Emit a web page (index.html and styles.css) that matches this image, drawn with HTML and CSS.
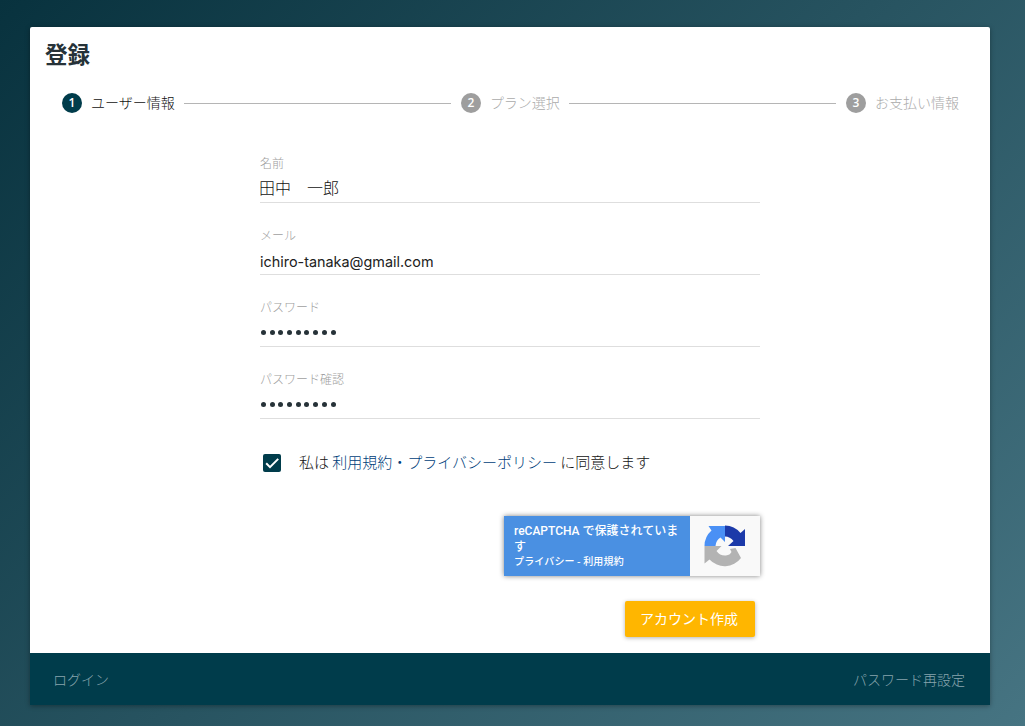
FILE: index.html
```html
<!DOCTYPE html>
<html lang="ja">
<head>
<meta charset="utf-8">
<title>登録</title>
<link rel="stylesheet" href="styles.css">
</head>
<body>
<main class="card">
  <h1 class="title">登録</h1>
  <div class="steps">
    <div class="step active"><span class="num">1</span><span class="step-label">ユーザー情報</span></div>
    <span class="line"></span>
    <div class="step"><span class="num">2</span><span class="step-label">プラン選択</span></div>
    <span class="line"></span>
    <div class="step"><span class="num">3</span><span class="step-label">お支払い情報</span></div>
  </div>
  <form class="form">
    <div class="field name"><span class="label">名前</span><span class="value">田中　一郎</span></div>
    <div class="field"><span class="label">メール</span><span class="value latin">ichiro-tanaka@gmail.com</span></div>
    <div class="field"><span class="label">パスワード</span><span class="value dots"><i></i><i></i><i></i><i></i><i></i><i></i><i></i><i></i><i></i></span></div>
    <div class="field"><span class="label">パスワード確認</span><span class="value dots"><i></i><i></i><i></i><i></i><i></i><i></i><i></i><i></i><i></i></span></div>
    <div class="agree">
      <svg class="check" viewBox="0 0 18 18"><rect width="18" height="18" rx="2" fill="#003c4b"/><path d="M3.2 9.3 7 13.1 15.2 4.9" fill="none" stroke="#fff" stroke-width="2"/></svg>
      <span class="agree-text">私は <a>利用規約・プライバシーポリシー</a> に同意します</span>
    </div>
    <div class="captcha">
      <div class="captcha-text">
        <div class="captcha-main">reCAPTCHA で保護されています</div>
        <div class="captcha-links">プライバシー - 利用規約</div>
      </div>
      <div class="captcha-logo">
        <svg viewBox="0 0 42 42">
          <path d="M.5 21A20.500 20.500 0 0 1 7.500 5.500L4.500 1H21V17L16.500 12.500Q12 15 11.500 21Z" fill="#4a90f5"/>
          <path d="M21 .5A20.500 20.500 0 0 1 36.500 8L41 4V21H24L29.500 16Q26 11.500 21 11.500Z" fill="#1c3aa9"/>
          <path d="M.5 21H17.500L12.500 26Q16 31 22 30.500Q26 30 27.500 27L26 24L31.500 23L37 33A20.500 20.500 0 0 1 5.500 34.500L.5 38.500Z" fill="#b3b3b3"/>
        </svg>
      </div>
    </div>
    <button class="submit" type="button">アカウント作成</button>
  </form>
  <footer class="footer"><a>ログイン</a><a>パスワード再設定</a></footer>
</main>
</body>
</html>
```
FILE: styles.css
```css
* { box-sizing: border-box; }
body {
  margin: 0;
  height: 726px;
  overflow: hidden;
  padding: 27px 35px 21px 30px;
  background: linear-gradient(135deg, #08323e, #467482);
  font-family: "Noto Sans CJK JP", sans-serif;
  font-weight: 300;
  color: #111;
}
.card {
  height: 678px;
  display: flex;
  flex-direction: column;
  background: #fff;
  border-radius: 2px 2px 0 0;
  box-shadow: 0 1px 5px rgba(0, 0, 0, .35);
}
.title { margin: 9px 0 0 15px; font-size: 22.5px; line-height: 34px; font-weight: 700; color: #263238; }
.steps { display: flex; align-items: center; height: 20px; margin: 23px 30px 0 32px; font-size: 14px; color: #aaa; white-space: nowrap; }
.step { display: flex; align-items: center; gap: 9px; height: 20px; }
.step-label { line-height: 20px; padding: 0 1px 2px 0; }
.active { color: #111; }
.num { width: 20px; height: 20px; border-radius: 50%; background: #9e9e9e; color: #fff; font: 600 12px/20px "Open Sans", sans-serif; text-align: center; }
.active .num { background: #003c4b; }
.line { flex: 1; height: 1px; background: #b5b5b5; margin: 0 10px 0 8px; }
.form { width: 500px; margin: 41px 0 0 230px; display: flex; flex-direction: column; }
.field { height: 72px; padding-top: 23px; border-bottom: 1px solid #dedede; display: flex; flex-direction: column; }
.field.name { height: 49px; padding-top: 0; }
.label { font-size: 12px; line-height: 18px; color: #a0a0a0; }
.value { font-size: 16px; line-height: 30px; }
.name .value { margin-left: -1px; }
.latin { font: 400 14.4px/30px Inter, sans-serif; margin-top: 3px; color: #212121; }
.dots { display: flex; gap: 3.7px; padding: 14px 0 0 1px; }
.dots i { width: 5px; height: 5px; border-radius: 50%; background: #263238; }
.agree { display: flex; align-items: center; gap: 18px; height: 24px; margin: 32px 0 0 3px; font-size: 15px; white-space: nowrap; }
.agree-text { padding-bottom: 3px; }
.check { width: 18px; height: 18px; }
.agree a { color: #00407a; }
.captcha { display: flex; align-self: flex-end; width: 256px; height: 60px; margin-top: 41px; box-shadow: 0 0 5px gray; }
.captcha-text { width: 186px; padding: 7px 0 0 10px; background: #4a90e2; color: #fff; white-space: nowrap; }
.captcha-main { width: 170px; font: 500 12px/16px Roboto, "Noto Sans CJK JP", sans-serif; white-space: normal; word-break: break-all; }
.captcha-links { font-size: 10px; line-height: 11px; font-weight: 500; letter-spacing: .15px; }
.captcha-logo { flex: 1; background: #f9f9f9; padding: 9px 0 0 14px; }
.captcha-logo svg { display: block; width: 42px; height: 42px; }
.submit { align-self: flex-end; width: 130px; height: 36px; margin: 25px 5px 0 0; padding: 0 2px 2px 0; border: 0; border-radius: 2px; background: #ffb600; color: #fff; font: 400 14px/34px "Noto Sans CJK JP", sans-serif; box-shadow: 0 1px 4px rgba(0, 0, 0, .3); }
.footer { display: flex; justify-content: space-between; align-items: center; height: 52px; margin-top: auto; padding: 0 25px 0 23px; background: #003c4b; color: #88a5ae; font-size: 14px; }
```
